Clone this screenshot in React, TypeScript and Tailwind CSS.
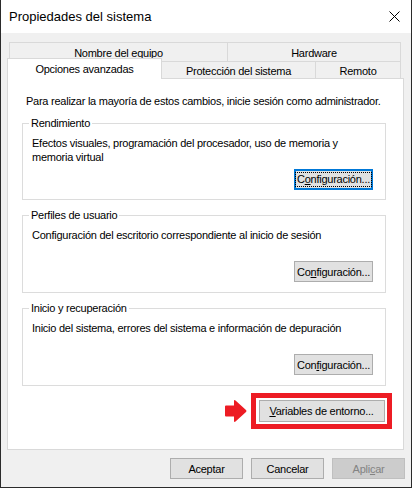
import type { ReactNode } from 'react';

function Button({
  children,
  className = '',
  focused = false,
  disabled = false,
}: {
  children: ReactNode;
  className?: string;
  focused?: boolean;
  disabled?: boolean;
}) {
  const tone = disabled
    ? 'bg-[#cccccc] border border-[#bfbfbf] text-[#838383]'
    : focused
      ? 'bg-[#e1e1e1] border-2 border-[#0078d7]'
      : 'bg-[#e1e1e1] border border-[#adadad]';
  return (
    <div className={`h-[21px] flex items-center justify-center ${tone} ${className}`}>
      {focused ? (
        <span className="outline outline-1 outline-dotted outline-black px-[1px] leading-[13px]">{children}</span>
      ) : (
        <span>{children}</span>
      )}
    </div>
  );
}

function Key({ children }: { children: ReactNode }) {
  return <span className="underline underline-offset-[1px]">{children}</span>;
}

function Group({
  title,
  text,
  button,
  focused = false,
  last = false,
}: {
  title: string;
  text: string;
  button: ReactNode;
  focused?: boolean;
  last?: boolean;
}) {
  return (
    <fieldset
      className={`ml-[14px] mt-[8px] w-[364px] border border-[#dcdcdc] pl-[9px] pr-[12px] ${last ? 'pb-[10px]' : 'pb-[9px]'}`}
    >
      <legend className="ml-[-3px] px-[2px]">{title}</legend>
      <div className="mt-[6px] h-[28px]">{text}</div>
      <div className="mt-[5px] flex justify-end">
        <Button focused={focused} className="w-[79px]">
          {button}
        </Button>
      </div>
    </fieldset>
  );
}

export default function App() {
  return (
    <div className="w-[412px] h-[488px] flex flex-col border-x border-b border-[#2b2b2b] bg-[#f0f0f0] text-black font-['Liberation_Sans',Arial,sans-serif] text-[11px] leading-[14px] tracking-[-0.25px]">
      {/* title bar */}
      <div className="h-[33px] shrink-0 bg-white flex items-center justify-between pl-[8px] pr-[11px]">
        <span className="text-[13px] tracking-normal">Propiedades del sistema</span>
        <svg width="11" height="11" viewBox="0 0 11 11">
          <path d="M0.5 0.5L10.5 10.5M10.5 0.5L0.5 10.5" stroke="#000" strokeWidth="1" fill="none" />
        </svg>
      </div>

      <div className="flex flex-col pt-[9px]">
        {/* tabs, back row */}
        <div className="ml-[8px] w-[392px] h-[19px] flex">
          <div className="w-[219px] border-l border-t border-r border-[#d9d9d9] flex items-center justify-center pt-[1px]">
            Nombre del equipo
          </div>
          <div className="flex-1 border-t border-r border-[#d9d9d9] flex items-center justify-center pt-[1px]">
            Hardware
          </div>
        </div>
        {/* tabs, front row */}
        <div className="ml-[6px] w-[394px] h-[17px] flex items-end">
          <div className="relative z-10 w-[155px] h-[21px] -mb-px bg-white border-l border-t border-r border-[#d9d9d9] flex items-center justify-center">
            Opciones avanzadas
          </div>
          <div className="w-[154px] h-[17px] border-t border-r border-[#d9d9d9] flex items-center justify-center pt-[1px]">
            Protección del sistema
          </div>
          <div className="flex-1 h-[17px] border-t border-r border-[#d9d9d9] flex items-center justify-center pt-[1px]">
            Remoto
          </div>
        </div>

        {/* panel */}
        <div className="ml-[6px] w-[397px] h-[372px] bg-white border border-[#d9d9d9] flex flex-col">
          <p className="mt-[15px] ml-[18px]">
            Para realizar la mayoría de estos cambios, inicie sesión como administrador.
          </p>
          <Group
            title="Rendimiento"
            text="Efectos visuales, programación del procesador, uso de memoria y memoria virtual"
            focused
            button={
              <>
                C<Key>o</Key>nfiguración...
              </>
            }
          />
          <Group
            title="Perfiles de usuario"
            text="Configuración del escritorio correspondiente al inicio de sesión"
            last
            button={
              <>
                Co<Key>n</Key>figuración...
              </>
            }
          />
          <Group
            title="Inicio y recuperación"
            text="Inicio del sistema, errores del sistema e información de depuración"
            last
            button={
              <>
                Con<Key>f</Key>iguración...
              </>
            }
          />
          <div className="mt-[7px] mr-[11px] flex justify-end items-center gap-[4px]">
            <svg width="23" height="24" viewBox="0 0 23 24">
              <path
                d="M1 7.5Q1 6.5 2 6.5H10V2Q10 0.5 11.5 1.5L22 11Q23 12 22 13L11.5 22.5Q10 23.5 10 22V17.5H2Q1 17.5 1 16.5Z"
                fill="#ed1c24"
              />
            </svg>
            <div className="w-[141px] h-[36px] border-[5px] border-[#ed1c24] flex items-center justify-center">
              <Button className="w-[126px] h-[22px]">
                <Key>V</Key>ariables de entorno...
              </Button>
            </div>
          </div>
        </div>

        {/* dialog buttons */}
        <div className="mt-[8px] pr-[6px] flex justify-end gap-[8px]">
          <Button className="w-[73px]">Aceptar</Button>
          <Button className="w-[73px]">Cancelar</Button>
          <Button className="w-[73px]" disabled>
            Apli<Key>c</Key>ar
          </Button>
        </div>
      </div>
    </div>
  );
}
